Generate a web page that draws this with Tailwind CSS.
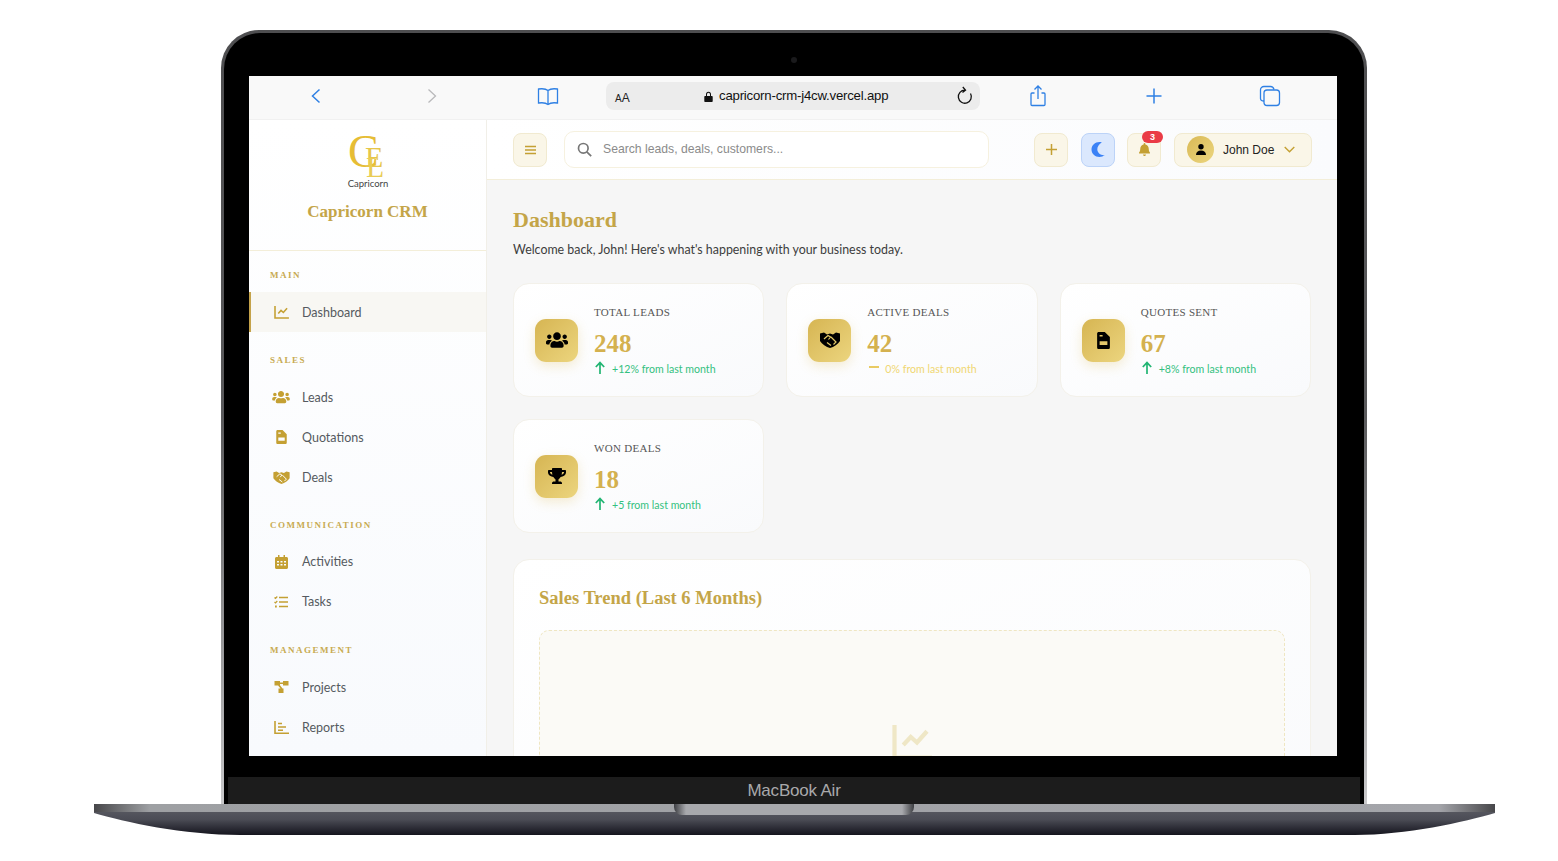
<!DOCTYPE html>
<html lang="en">
<head>
  <meta charset="UTF-8" />
  <title>Capricorn CRM – MacBook Air mockup</title>
  <script src="https://cdn.jsdelivr.net/npm/@tailwindcss/browser@4"></script>
</head>
<body class="relative w-[1558px] h-[861px] overflow-hidden bg-white font-['Lato',sans-serif]">

  <!-- Shared icons -->
  <svg class="hidden">
    <symbol id="i-chart" viewBox="0 0 16 14"><path d="M1 0V13H16M4.500 8L7.500 4.800 10 7 14 2.500" fill="none" stroke="currentColor" stroke-width="1.700"/></symbol>
    <symbol id="i-users" viewBox="0 0 640 512"><path d="M96 224c35.3 0 64-28.7 64-64s-28.7-64-64-64-64 28.7-64 64 28.7 64 64 64zm448 0c35.3 0 64-28.7 64-64s-28.7-64-64-64-64 28.7-64 64 28.7 64 64 64zm32 32h-64c-17.6 0-33.5 7.1-45.1 18.6 40.3 22.1 68.9 62 75.1 109.4h66c17.7 0 32-14.3 32-32v-32c0-35.3-28.7-64-64-64zm-256 0c61.9 0 112-50.1 112-112S381.9 32 320 32 208 82.1 208 144s50.1 112 112 112zm76.8 32h-8.3c-20.8 10-43.9 16-68.5 16s-47.6-6-68.5-16h-8.3C179.6 288 128 339.6 128 403.2V432c0 26.5 21.5 48 48 48h288c26.5 0 48-21.5 48-48v-28.8c0-63.6-51.6-115.2-115.2-115.2zm-223.7-13.4C161.5 263.1 145.6 256 128 256H64c-35.3 0-64 28.7-64 64v32c0 17.7 14.3 32 32 32h65.9c6.3-47.4 34.9-87.3 75.2-109.4z"/></symbol>
    <symbol id="i-file" viewBox="0 0 384 512"><path fill-rule="evenodd" d="M48 0H230L384 154V464c0 27-21 48-48 48H48c-27 0-48-21-48-48V48C0 21 21 0 48 0zM75 275V395H309V275zM75 90V135H165V90z"/></symbol>
    <symbol id="i-trophy" viewBox="0 0 576 512"><path d="M552 64H448V24c0-13.3-10.7-24-24-24H152c-13.3 0-24 10.7-24 24v40H24C10.7 64 0 74.7 0 88v56c0 35.7 22.5 72.4 61.9 100.7 31.5 22.7 69.8 37.1 110 41.7C203.3 338.5 240 360 240 360v72h-48c-35.3 0-64 20.7-64 56v12c0 6.6 5.4 12 12 12h296c6.6 0 12-5.4 12-12v-12c0-35.3-28.7-56-64-56h-48v-72s36.7-21.5 68.1-73.6c40.3-4.6 78.6-19 110-41.7 39.3-28.3 61.9-65 61.9-100.7V88c0-13.3-10.7-24-24-24zM99.3 192.8C74.9 175.2 64 155.6 64 144v-16h64.2c1 32.6 5.8 61.2 12.8 86.2-15.1-5.2-29.2-12.4-41.7-21.4zM512 144c0 16.1-17.7 36.1-35.3 48.8-12.5 9-26.7 16.2-41.8 21.4 7-25 11.8-53.6 12.8-86.2H512v16z"/></symbol>
    <symbol id="i-diagram" viewBox="0 0 14 12"><path d="M0 0h5.500v1.500h3V0H14v4.500H8.500V3h-3v1.200L8 7.500h1V12H4V7.500h2L3.600 4.500H0z"/></symbol>
    <symbol id="i-up" viewBox="0 0 12 14"><path d="M6 13V2M1.8 6L6 1.6 10.2 6" fill="none" stroke="currentColor" stroke-width="1.7"/></symbol>
  </svg>

  <!-- Laptop lid -->
  <div class="ml-[221px] mt-[30px] w-[1146px] h-[774px] rounded-t-[38px] pt-[3px] px-[3px] bg-linear-to-b from-[#4e4e50] via-[#5a5a5c] to-[#c9c9cb] relative">
    <div class="h-full rounded-t-[36px] bg-black flex flex-col items-center">
      <div class="relative h-[43px] w-full shrink-0">
        <span class="absolute left-[567px] top-[24px] w-[6px] h-[6px] rounded-full bg-[#1a1a1c]"></span>
      </div>

      <!-- Screen -->
      <div class="w-[1088px] h-[680px] mr-[2px] shrink-0 overflow-hidden bg-[#f6f6f6] flex flex-col">

        <!-- Safari bar -->
        <div class="h-[44px] shrink-0 bg-[#f9f9f9] border-b border-[#f1f1f1] flex items-center pl-[55px] pb-[3px] gap-[92px] text-[#2f80e4]">
          <svg class="w-6 h-6" viewBox="0 0 24 24" fill="none" stroke="currentColor" stroke-width="1.5"><path d="M15.5 5.5L8.5 12l7 6.5"/></svg>
          <svg class="w-6 h-6 text-[#b9b9bb]" viewBox="0 0 24 24" fill="none" stroke="currentColor" stroke-width="1.3"><path d="M8.5 5.5l7 6.5-7 6.5"/></svg>
          <svg class="w-6 h-6" viewBox="0 0 24 24" fill="none" stroke="currentColor" stroke-width="1.3"><path d="M12 6.5C10 4.800 6 4.500 2.500 5v14c3.500-.5 7.500-.2 9.500 1.500 2-1.700 6-2 9.500-1.500V5C18 4.500 14 4.800 12 6.500zM12 6.500V20.500"/></svg>
          <div class="-ml-[46px] w-[374px] h-[28px] rounded-[8px] bg-[#ececec] flex items-center pl-[9px] pr-[5px] text-black font-['Liberation_Sans',sans-serif]">
            <span class="text-[12px] w-[89px] pt-[3px] text-[#222]"><span class="text-[10px]">A</span>A</span>
            <svg class="w-[9px] h-[11px]" viewBox="0 0 9 11"><path d="M2 5V3.200a2.500 2.500 0 015 0V5h.7c.6 0 1 .4 1 1v4c0 .6-.4 1-1 1H1.300c-.6 0-1-.4-1-1V6c0-.6.4-1 1-1zm1 0h3V3.200a1.500 1.500 0 00-3 0z" fill="#111"/></svg>
            <span class="ml-[6px] text-[13.2px] tracking-[-0.2px] text-[#111]">capricorn-crm-j4cw.vercel.app</span>
            <svg class="ml-auto w-5 h-5" viewBox="0 0 20 20" fill="none" stroke="#111" stroke-width="1.300"><path d="M15.500 7.500A6.500 6.500 0 1 1 10 4.200M7.800 1l2.700 3.200-3 2.300"/></svg>
          </div>
          <svg class="-ml-[46px] w-6 h-6" viewBox="0 0 24 24" fill="none" stroke="currentColor" stroke-width="1.3"><path d="M8.500 9H6c-.6 0-1 .4-1 1v10.500c0 .6.4 1 1 1h12c.6 0 1-.4 1-1V10c0-.6-.4-1-1-1h-2.500M12 15V2M8.500 5.500L12 2l3.500 3.500"/></svg>
          <svg class="w-6 h-6" viewBox="0 0 24 24" fill="none" stroke="currentColor" stroke-width="1.500"><path d="M12 4.500v15M4.500 12h15"/></svg>
          <svg class="w-6 h-6" viewBox="0 0 24 24" fill="none" stroke="currentColor" stroke-width="1.300"><path d="M6 17c-2 0-3.500-.5-3.500-2.500V6c0-2 1.500-3.500 3.500-3.500h6.500c1.800 0 3 .8 3.500 3"/><rect x="6" y="6" width="15.500" height="15.500" rx="3"/></svg>
        </div>

        <div class="flex flex-1 min-h-0">
          <!-- Sidebar -->
          <aside class="w-[238px] shrink-0 bg-linear-to-b from-white to-[#f8fafd] border-r border-[#f1efe8]">
            <div class="h-[131px] border-b border-[#f3eed9] flex flex-col items-center pt-[10px]">
              <svg class="w-[60px] h-[60px] overflow-visible" viewBox="0 0 60 60">
                <text x="10" y="37" font-family="Liberation Serif" font-size="46" fill="#e6bd35">C</text>
                <text x="27" y="37" font-family="Liberation Serif" font-size="30" fill="#e6c64a">E</text>
                <text x="28" y="47" font-family="Liberation Serif" font-size="30" fill="#e9cc55">L</text>
                <text x="30" y="57" text-anchor="middle" font-family="Lato" font-size="9.500" fill="#444">Capricorn</text>
              </svg>
              <div class="mt-[10px] font-['Liberation_Serif',serif] font-bold text-[17px] leading-[24px] text-[#c4a548]">Capricorn CRM</div>
            </div>

            <div class="pt-[18px] text-[12.500px] text-[#555a60]">
              <div class="pl-[21px] h-[12px] mb-[11px] font-['Liberation_Serif',serif] font-bold text-[9px] leading-[12px] tracking-[1.500px] text-[#c8ab52]">MAIN</div>
              <a class="h-[40px] flex items-center border-l-2 border-[#c4a24a] bg-[#f8f7f3] pl-[19px]">
                <span class="w-[22px] flex justify-center"><svg class="w-[15px] h-[13px] text-[#c4a033]"><use href="#i-chart"/></svg></span>
                <span class="ml-[10px] pt-[2px]">Dashboard</span>
              </a>

              <div class="mt-[22px] pl-[21px] h-[12px] mb-[11px] font-['Liberation_Serif',serif] font-bold text-[9px] leading-[12px] tracking-[1.500px] text-[#c8ab52]">SALES</div>
              <a class="h-[40px] flex items-center pl-[21px]">
                <span class="w-[22px] flex justify-center"><svg class="w-[18px] h-[14px] text-[#c4a033] fill-current"><use href="#i-users"/></svg></span>
                <span class="ml-[10px] pt-[2px]">Leads</span>
              </a>
              <a class="h-[40px] flex items-center pl-[21px]">
                <span class="w-[22px] flex justify-center"><svg class="w-[11px] h-[14px] text-[#c4a033] fill-current"><use href="#i-file"/></svg></span>
                <span class="ml-[10px] pt-[2px]">Quotations</span>
              </a>
              <a class="h-[40px] flex items-center pl-[21px]">
                <span class="w-[22px] flex justify-center">
                  <svg class="w-[17px] h-[13px]" viewBox="0 0 20 16"><path d="M0 1.500L4 .5 7 2.500 10 1.500 13 2.500 16 .5 20 1.500V9C18 12 14 15 10 16 6 15 2 12 0 9z" fill="#c4a033"/><path d="M4 7l4-3.500 2.500 1.500-2 2.500M11 5l5 5-2.500 2.500M7 10.500l4 3" fill="none" stroke="#fff" stroke-width="1.200"/></svg>
                </span>
                <span class="ml-[10px] pt-[2px]">Deals</span>
              </a>

              <div class="mt-[22px] pl-[21px] h-[12px] mb-[11px] font-['Liberation_Serif',serif] font-bold text-[9px] leading-[12px] tracking-[1.500px] text-[#c8ab52]">COMMUNICATION</div>
              <a class="h-[40px] flex items-center pl-[21px]">
                <span class="w-[22px] flex justify-center">
                  <svg class="w-[13px] h-[14px] text-[#c4a033]" viewBox="0 0 13 14"><path fill="currentColor" fill-rule="evenodd" d="M3 0h1.500v2h4V0H10v2h1.500c.8 0 1.500.7 1.500 1.500V12.500c0 .8-.7 1.500-1.500 1.500h-10C.7 14 0 13.300 0 12.500V3.500C0 2.700.7 2 1.500 2H3zM2 6v1.500h2V6zm3.500 0v1.500h2V6zM9 6v1.500h2V6zM2 9v1.500h2V9zm3.500 0v1.500h2V9zM9 9v1.500h2V9z"/></svg>
                </span>
                <span class="ml-[10px]">Activities</span>
              </a>
              <a class="h-[40px] flex items-center pl-[21px]">
                <span class="w-[22px] flex justify-center">
                  <svg class="w-[14px] h-[12px] text-[#c4a033]" viewBox="0 0 14 12" fill="none" stroke="currentColor"><path d="M5 1.500h9M5 6h9M5 10.500h9" stroke-width="1.600"/><path d="M.5 1.500l1 1 1.800-2M.5 6l1 1 1.800-2" stroke-width="1.200"/><path d="M1 10.500h1.800" stroke-width="1.800"/></svg>
                </span>
                <span class="ml-[10px]">Tasks</span>
              </a>

              <div class="mt-[22px] pl-[21px] h-[12px] mb-[11px] font-['Liberation_Serif',serif] font-bold text-[9px] leading-[12px] tracking-[1.500px] text-[#c8ab52]">MANAGEMENT</div>
              <a class="h-[40px] flex items-center pl-[21px]">
                <span class="w-[22px] flex justify-center"><svg class="w-[15px] h-[12px] text-[#c4a033] fill-current"><use href="#i-diagram"/></svg></span>
                <span class="ml-[10px] pt-[2px]">Projects</span>
              </a>
              <a class="h-[40px] flex items-center pl-[21px]">
                <span class="w-[22px] flex justify-center">
                  <svg class="w-[15px] h-[13px] text-[#c4a033]" viewBox="0 0 15 13" fill="none" stroke="currentColor" stroke-width="1.600"><path d="M1 0v12.200H15M4 2.500h4M4 6h8M4 9.200h5"/></svg>
                </span>
                <span class="ml-[10px] pt-[2px]">Reports</span>
              </a>
            </div>
          </aside>

          <div class="flex-1 min-w-0 flex flex-col">
            <!-- Top bar -->
            <header class="h-[60px] shrink-0 bg-linear-to-r from-white to-[#fafbfd] border-b border-[#f3eed9] flex items-center pl-[26px] pr-[25px]">
              <button class="w-[34px] h-[34px] rounded-[8px] bg-[#faf6e8] border border-[#f1ead0] flex items-center justify-center">
                <svg class="w-[11px] h-[10px]" viewBox="0 0 11 10" fill="none" stroke="#c4a033" stroke-width="1.400"><path d="M0 1.500h11M0 5h11M0 8.500h11"/></svg>
              </button>
              <div class="ml-[17px] w-[425px] h-[37px] rounded-[10px] bg-white border border-[#f6f1df] flex items-center pl-[12px] font-['Liberation_Sans',sans-serif]">
                <svg class="w-[15px] h-[15px]" viewBox="0 0 15 15" fill="none" stroke="#777" stroke-width="1.700"><circle cx="6.300" cy="6.300" r="4.800"/><path d="M9.800 9.800l4.400 4.400"/></svg>
                <span class="ml-[11px] text-[12.2px] text-[#8b8b8b]">Search leads, deals, customers...</span>
              </div>
              <button class="ml-auto w-[34px] h-[34px] rounded-[8px] bg-[#faf6e8] border border-[#f1ead0] flex items-center justify-center">
                <svg class="w-[11px] h-[11px]" viewBox="0 0 11 11" fill="none" stroke="#c4a033" stroke-width="1.500"><path d="M5.500 0v11M0 5.500h11"/></svg>
              </button>
              <button class="ml-[13px] w-[34px] h-[34px] rounded-[8px] bg-[#dbe8fd] border border-[#bcd3f8] flex items-center justify-center">
                <svg class="w-[14px] h-[15px]" viewBox="0 0 14 15"><path d="M8.500 0C4 0 .5 3.300 .5 7.500S4 15 8.500 15c2 0 3.800-.7 5.200-1.900C9.800 13.600 6.300 11 6.300 7.300 6.300 4.400 8.200 1.800 10.800.4 10 .1 9.300 0 8.500 0z" fill="#3b82f6"/></svg>
              </button>
              <div class="relative ml-[12px]">
                <button class="w-[34px] h-[34px] rounded-[8px] bg-[#faf6e8] border border-[#f1ead0] flex items-center justify-center">
                  <svg class="w-[11px] h-[13px]" viewBox="0 0 11 13"><path d="M5.500 0c.5 0 .9.400.9.900v.5c2 .4 3.300 2.100 3.300 4 0 2.800 1 3.600 1.300 4.200.2.400-.1.900-.6.900H.6c-.5 0-.8-.5-.6-.9.300-.6 1.300-1.400 1.300-4.200 0-1.900 1.300-3.600 3.300-4V.9c0-.5.4-.9.900-.9zM4 11.500h3c0 .8-.7 1.500-1.500 1.500S4 12.300 4 11.500z" fill="#c4a033"/></svg>
                </button>
                <span class="absolute -top-[2px] left-[15px] w-[21px] h-[12px] rounded-full bg-[#ea3b46] text-white text-[9px] leading-[12px] font-bold text-center font-['Liberation_Sans',sans-serif]">3</span>
              </div>
              <button class="ml-[13px] w-[138px] h-[34px] rounded-[8px] bg-[#faf6e8] border border-[#f1ead0] flex items-center pl-[12px] font-['Liberation_Sans',sans-serif]">
                <span class="w-[27px] h-[27px] rounded-full bg-linear-to-br from-[#d9b955] to-[#ecd67e] flex items-center justify-center">
                  <svg class="w-[10px] h-[11px]" viewBox="0 0 10 11"><circle cx="5" cy="2.700" r="2.700"/><path d="M0 11c0-3 2-4.500 5-4.500s5 1.500 5 4.500z"/></svg>
                </span>
                <span class="ml-[9px] text-[12px] text-[#222]">John Doe</span>
                <svg class="ml-[10px] w-[11px] h-[7px]" viewBox="0 0 11 7" fill="none" stroke="#c4a033" stroke-width="1.400"><path d="M.7 1l4.800 4.800L10.300 1"/></svg>
              </button>
            </header>

            <!-- Page -->
            <main class="flex-1 pl-[26px] pr-[26px] pt-[26px] min-h-0">
              <h1 class="font-['Liberation_Serif',serif] font-bold text-[22px] leading-[28px] text-[#c4a548]">Dashboard</h1>
              <p class="mt-[7px] text-[12.4px] leading-[18px] text-[#3d3d3d]">Welcome back, John! Here's what's happening with your business today.</p>

              <div class="mt-[24px] grid grid-cols-3 gap-[22px]">
                <div class="h-[114px] rounded-[16px] bg-linear-to-br from-white to-[#f9fafc] border border-[#f3f1ea] flex items-center pl-[21px]">
                  <div class="w-[43px] h-[43px] rounded-[11px] bg-linear-to-br from-[#d6b552] to-[#ecd57e] shadow-[0_4px_12px_rgba(212,175,55,0.22)] flex items-center justify-center">
                    <svg class="w-[22px] h-[18px] fill-black"><use href="#i-users"/></svg>
                  </div>
                  <div class="ml-[16px]">
                    <div class="font-['Liberation_Serif',serif] text-[11px] leading-[16px] tracking-[0.3px] text-[#565656]">TOTAL LEADS</div>
                    <div class="mt-[9px] font-['Liberation_Serif',serif] font-bold text-[25px] leading-[30px] text-[#d4b14f]">248</div>
                    <div class="mt-[2px] flex items-center text-[10.6px] leading-[16px] text-[#34c180]"><svg class="w-[12px] h-[14px] text-[#22b573] mr-[6px] -translate-y-px"><use href="#i-up"/></svg>+12% from last month</div>
                  </div>
                </div>

                <div class="h-[114px] rounded-[16px] bg-linear-to-br from-white to-[#f9fafc] border border-[#f3f1ea] flex items-center pl-[21px]">
                  <div class="w-[43px] h-[43px] rounded-[11px] bg-linear-to-br from-[#d6b552] to-[#ecd57e] shadow-[0_4px_12px_rgba(212,175,55,0.22)] flex items-center justify-center">
                    <svg class="w-[20px] h-[16px]" viewBox="0 0 20 16"><path d="M0 1.500L4 .5 7 2.500 10 1.500 13 2.500 16 .5 20 1.500V9C18 12 14 15 10 16 6 15 2 12 0 9z"/><path d="M4 7l4-3.500 2.500 1.500-2 2.500M11 5l5 5-2.500 2.500M7 10.500l4 3" fill="none" stroke="#e3c868" stroke-width="1.200"/></svg>
                  </div>
                  <div class="ml-[16px]">
                    <div class="font-['Liberation_Serif',serif] text-[11px] leading-[16px] tracking-[0.3px] text-[#565656]">ACTIVE DEALS</div>
                    <div class="mt-[9px] font-['Liberation_Serif',serif] font-bold text-[25px] leading-[30px] text-[#d4b14f]">42</div>
                    <div class="mt-[2px] flex items-center text-[10.6px] leading-[16px] text-[#f0d772]"><span class="w-[10px] h-[2px] bg-[#e9cb63] mr-[6px] ml-[2px] -translate-y-[2px]"></span>0% from last month</div>
                  </div>
                </div>

                <div class="h-[114px] rounded-[16px] bg-linear-to-br from-white to-[#f9fafc] border border-[#f3f1ea] flex items-center pl-[21px]">
                  <div class="w-[43px] h-[43px] rounded-[11px] bg-linear-to-br from-[#d6b552] to-[#ecd57e] shadow-[0_4px_12px_rgba(212,175,55,0.22)] flex items-center justify-center">
                    <svg class="w-[13px] h-[17px] fill-black"><use href="#i-file"/></svg>
                  </div>
                  <div class="ml-[16px]">
                    <div class="font-['Liberation_Serif',serif] text-[11px] leading-[16px] tracking-[0.3px] text-[#565656]">QUOTES SENT</div>
                    <div class="mt-[9px] font-['Liberation_Serif',serif] font-bold text-[25px] leading-[30px] text-[#d4b14f]">67</div>
                    <div class="mt-[2px] flex items-center text-[10.6px] leading-[16px] text-[#34c180]"><svg class="w-[12px] h-[14px] text-[#22b573] mr-[6px] -translate-y-px"><use href="#i-up"/></svg>+8% from last month</div>
                  </div>
                </div>

                <div class="h-[114px] rounded-[16px] bg-linear-to-br from-white to-[#f9fafc] border border-[#f3f1ea] flex items-center pl-[21px]">
                  <div class="w-[43px] h-[43px] rounded-[11px] bg-linear-to-br from-[#d6b552] to-[#ecd57e] shadow-[0_4px_12px_rgba(212,175,55,0.22)] flex items-center justify-center">
                    <svg class="w-[18px] h-[16px] fill-black"><use href="#i-trophy"/></svg>
                  </div>
                  <div class="ml-[16px]">
                    <div class="font-['Liberation_Serif',serif] text-[11px] leading-[16px] tracking-[0.3px] text-[#565656]">WON DEALS</div>
                    <div class="mt-[9px] font-['Liberation_Serif',serif] font-bold text-[25px] leading-[30px] text-[#d4b14f]">18</div>
                    <div class="mt-[2px] flex items-center text-[10.6px] leading-[16px] text-[#34c180]"><svg class="w-[12px] h-[14px] text-[#22b573] mr-[6px] -translate-y-px"><use href="#i-up"/></svg>+5 from last month</div>
                  </div>
                </div>
              </div>

              <!-- Chart card -->
              <div class="mt-[26px] h-[300px] rounded-[16px] bg-linear-to-br from-white to-[#f9fafc] border border-[#f3f1ea] pt-[25px] px-[25px]">
                <h2 class="font-['Liberation_Serif',serif] font-bold text-[18.500px] leading-[26px] text-[#c4a548]">Sales Trend (Last 6 Months)</h2>
                <div class="mt-[19px] h-[240px] rounded-[10px] bg-[#fbfaf6] border border-dashed border-[#efe6c2] flex justify-center pt-[94px]">
                  <svg class="w-[40px] h-[35px] text-[#efe7c6]"><use href="#i-chart"/></svg>
                </div>
              </div>
            </main>
          </div>
        </div>
      </div>

      <div class="h-[21px] shrink-0"></div>
      <!-- Chin -->
      <div class="w-[1132px] flex-1 bg-[#1c1c1c] flex items-center justify-center font-['Liberation_Sans',sans-serif] text-[17px] tracking-[-0.2px] text-[#a9a9ab]">MacBook Air</div>
    </div>
  </div>

  <!-- Laptop base -->
  <div class="relative ml-[94px] w-[1401px] h-[31px] [clip-path:path('M0_0H1401V9C1371_18_1311_31_1261_31H146C90_31_30_18_0_9Z')] bg-linear-to-b from-[#5f6068] via-[#4b4c55] to-[#15151e]">
    <div class="h-[8px] bg-[linear-gradient(90deg,#47474a,#9ea0a3_4%,#a4a5aa_96%,#47474a)]"></div>
    <div class="absolute top-0 left-[580px] w-[240px] h-[11px] rounded-b-[8px] bg-[linear-gradient(90deg,#3d3e42,#a8a9ad_5%,#a8a9ad_95%,#3d3e42)]"></div>
  </div>
</body>
</html>
